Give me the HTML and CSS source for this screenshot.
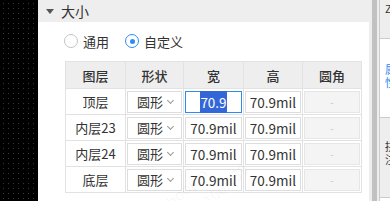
FILE: index.html
```html
<!DOCTYPE html>
<html lang="zh-CN">
<head>
  <meta charset="UTF-8">
  <title>大小</title>
  <link rel="stylesheet" href="styles.css">
</head>
<body>
  <div class="canvas"></div>

  <div class="panel">
    <div class="section-head">
      <span class="caret"></span>
      <span>大小</span>
    </div>

    <div class="radios">
      <label class="radio"><span class="dot"></span>通用</label>
      <label class="radio checked"><span class="dot"></span>自定义</label>
    </div>

    <table class="size-table">
      <thead>
        <tr>
          <th class="c-layer">图层</th>
          <th class="c-shape">形状</th>
          <th class="c-w">宽</th>
          <th class="c-h">高</th>
          <th class="c-r">圆角</th>
        </tr>
      </thead>
      <tbody>
        <tr>
          <td>顶层</td>
          <td><div class="select">圆形<span class="chev"></span></div></td>
          <td><div class="input focus"><span class="sel">70.9</span></div></td>
          <td><div class="input">70.9mil</div></td>
          <td><div class="input off">-</div></td>
        </tr>
        <tr>
          <td>内层23</td>
          <td><div class="select">圆形<span class="chev"></span></div></td>
          <td><div class="input">70.9mil</div></td>
          <td><div class="input">70.9mil</div></td>
          <td><div class="input off">-</div></td>
        </tr>
        <tr>
          <td>内层24</td>
          <td><div class="select">圆形<span class="chev"></span></div></td>
          <td><div class="input">70.9mil</div></td>
          <td><div class="input">70.9mil</div></td>
          <td><div class="input off">-</div></td>
        </tr>
        <tr>
          <td>底层</td>
          <td><div class="select">圆形<span class="chev"></span></div></td>
          <td><div class="input">70.9mil</div></td>
          <td><div class="input">70.9mil</div></td>
          <td><div class="input off">-</div></td>
        </tr>
      </tbody>
    </table>

    <div class="watermark">明亿hoojim<br>192.168.160.139</div>
  </div>

  <div class="gutter"><div class="thumb"></div></div>

  <div class="side">
    <div class="side-box top">Z</div>
    <div class="side-link">属<br>性</div>
    <div class="side-box bottom">拼<br>注</div>
  </div>
</body>
</html>
```

FILE: styles.css
```css
* {
  box-sizing: border-box;
  margin: 0;
  padding: 0;
}

html, body {
  width: 390px;
  height: 201px;
  overflow: hidden;
}

body {
  display: flex;
  font-family: "Noto Sans CJK SC", "Noto Sans", sans-serif;
  font-size: 13px;
  color: #333;
  background: #fff;
}

.canvas {
  width: 38px;
  flex-shrink: 0;
  background-color: #000;
  background-image: radial-gradient(circle, #3a3a3a 0.6px, transparent 0.9px);
  background-size: 5px 5px;
  background-position: 1px 1px;
}

.panel {
  position: relative;
  width: 331px;
  flex-shrink: 0;
  background: #fff;
  overflow: hidden;
}

.section-head {
  height: 22px;
  background: #eee;
  display: flex;
  align-items: center;
  gap: 7px;
  padding-left: 8px;
  font-size: 14px;
  color: #333;
}

.caret {
  width: 0;
  height: 0;
  border-left: 4px solid transparent;
  border-right: 4px solid transparent;
  border-top: 5px solid #555;
  margin-top: 1px;
}

.radios {
  height: 39px;
  display: flex;
  align-items: center;
  gap: 16px;
  padding-left: 26px;
  padding-bottom: 1px;
}

.radio {
  display: flex;
  align-items: center;
  gap: 5px;
  font-size: 13px;
}

.radio .dot {
  width: 14px;
  height: 14px;
  border: 1px solid #c4c4c4;
  border-radius: 50%;
  position: relative;
}

.radio.checked .dot {
  border-color: #2d8cf0;
}

.radio.checked .dot::after {
  content: "";
  position: absolute;
  left: 3.5px;
  top: 3.5px;
  width: 5px;
  height: 5px;
  border-radius: 50%;
  background: #2d8cf0;
}

.size-table {
  margin-left: 27px;
  border-collapse: collapse;
  table-layout: fixed;
  width: 296px;
}

.size-table th,
.size-table td {
  border: 1px solid #e2e2e2;
  text-align: center;
  padding: 0;
}

.size-table th {
  height: 27px;
  background: #eee;
  font-weight: 500;
  color: #333;
}

.size-table td {
  height: 26px;
}

.c-layer { width: 60px; }
.c-shape { width: 58px; }
.c-w { width: 60px; }
.c-h { width: 59px; }
.c-r { width: 59px; }

.select {
  height: 22px;
  margin: 0 1px;
  border: 1px solid #ddd;
  display: flex;
  align-items: center;
  padding-left: 9px;
  position: relative;
  text-align: left;
}

.chev {
  position: absolute;
  right: 8px;
  top: 6px;
  width: 5px;
  height: 5px;
  border-right: 1px solid #999;
  border-bottom: 1px solid #999;
  transform: rotate(45deg);
}

.input {
  height: 22px;
  margin: 0 1px;
  border: 1px solid #ddd;
  line-height: 20px;
  font-size: 13.5px;
  color: #333;
}

.input.focus {
  border-color: #2d8cf0;
}

.input .sel {
  background: #3366d6;
  color: #fff;
  padding: 1px 0;
}

.input.off {
  background: #f4f4f4;
  border-color: #e6e6e6;
  color: #ccc;
  font-size: 11px;
}

.watermark {
  position: absolute;
  left: 100px;
  top: 215px;
  transform: rotate(-42deg);
  transform-origin: left top;
  font-size: 15px;
  line-height: 24px;
  color: rgba(0, 0, 0, 0.045);
  white-space: nowrap;
  pointer-events: none;
}

.gutter {
  width: 11px;
  flex-shrink: 0;
  background: #eee;
  padding: 0 2px 0 3px;
  border-right: 1px solid #ccc;
}

.thumb {
  height: 100%;
  background: #c1c1c1;
}

.side {
  flex: 1;
  overflow: hidden;
  display: flex;
  flex-direction: column;
}

.side-box {
  background: #eee;
  padding: 2px 0 0 5px;
  font-size: 11px;
  line-height: 13px;
  color: #333;
}

.side-box.top {
  height: 39px;
  border-bottom: 1px solid #ccc;
}

.side-link {
  height: 78px;
  padding: 24px 0 0 5px;
  font-size: 11px;
  line-height: 13px;
  color: #2d8cf0;
}

.side-box.bottom {
  height: 81px;
  border-top: 1px solid #ccc;
  border-bottom: 1px solid #ccc;
  padding-top: 22px;
}
```
